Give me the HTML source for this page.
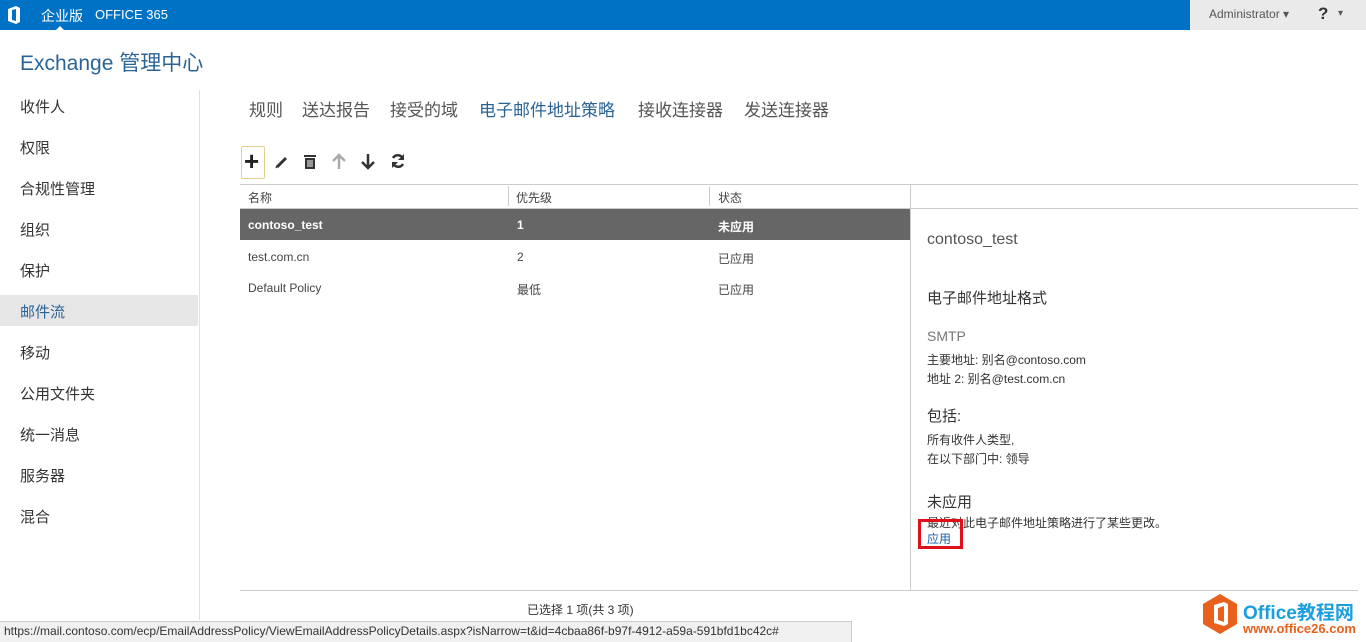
<!DOCTYPE html>
<html><head><meta charset="utf-8"><style>
*{margin:0;padding:0;box-sizing:border-box}
body{width:1366px;height:642px;overflow:hidden;background:#fff;font-family:"Liberation Sans","Noto Sans CJK SC",sans-serif;color:#333;position:relative}
.a{position:absolute;white-space:nowrap}
.top{left:0;top:0;width:1190px;height:30px;background:#0072c6}
.topr{left:1190px;top:0;width:176px;height:30px;background:#eaeaea}
.nav{left:20px;font-size:15px;color:#333}
.tab{top:96px;font-size:17px;color:#555}
.cell{font-size:12px;color:#444}
</style></head><body>
<div class="a top"></div>
<div class="a topr"></div>
<svg class="a" style="left:7px;top:6px" width="14" height="18" viewBox="0 0 14 18"><path d="M1 3 L9 0 L13 2 V16 L9 18 L1 15 Z" fill="#fff"/><path d="M5 4 L9 3 V15 L5 14 Z" fill="#0072c6"/></svg>
<div class="a" style="left:41px;top:6px;font-size:14px;color:#fff">企业版</div>
<div class="a" style="left:56px;top:26px;width:0;height:0;border-left:4px solid transparent;border-right:4px solid transparent;border-bottom:4px solid #fff"></div>
<div class="a" style="left:95px;top:7px;font-size:13px;color:#fff">OFFICE 365</div>
<div class="a" style="left:1209px;top:7px;font-size:12px;color:#555">Administrator ▾</div>
<div class="a" style="left:1318px;top:4px;font-size:17px;font-weight:bold;color:#333">?</div>
<div class="a" style="left:1338px;top:8px;font-size:10px;color:#555">▾</div>
<div class="a" style="left:20px;top:47px;font-size:21px;color:#2a6496">Exchange 管理中心</div>
<div class="a" style="left:0;top:295px;width:198px;height:31px;background:#e6e6e6"></div>
<div class="a" style="left:199px;top:90px;width:1px;height:530px;background:#e0e0e0"></div>
<div class="a nav" style="top:96px">收件人</div>
<div class="a nav" style="top:137px">权限</div>
<div class="a nav" style="top:178px">合规性管理</div>
<div class="a nav" style="top:219px">组织</div>
<div class="a nav" style="top:260px">保护</div>
<div class="a nav" style="top:301px;color:#2a6496">邮件流</div>
<div class="a nav" style="top:342px">移动</div>
<div class="a nav" style="top:383px">公用文件夹</div>
<div class="a nav" style="top:424px">统一消息</div>
<div class="a nav" style="top:465px">服务器</div>
<div class="a nav" style="top:506px">混合</div>
<div class="a tab" style="left:249px">规则</div>
<div class="a tab" style="left:302px">送达报告</div>
<div class="a tab" style="left:390px">接受的域</div>
<div class="a tab" style="left:479px;color:#2a6496">电子邮件地址策略</div>
<div class="a tab" style="left:638px">接收连接器</div>
<div class="a tab" style="left:744px">发送连接器</div>
<div class="a" style="left:241px;top:146px;width:24px;height:33px;border:1px solid #e3cf8f;border-radius:2px"></div>
<div class="a" style="left:244px;top:146px;font-size:26px;font-weight:bold;color:#222;line-height:30px">+</div>
<svg class="a" style="left:274px;top:154px" width="16" height="16" viewBox="0 0 16 16"><path d="M3 13 L12 4" stroke="#333" stroke-width="3"/><path d="M2 14 L3 12" stroke="#333" stroke-width="1.5"/></svg>
<svg class="a" style="left:303px;top:154px" width="14" height="16" viewBox="0 0 14 16"><rect x="1" y="1" width="12" height="2" fill="#333"/><rect x="2" y="4" width="10" height="11" fill="#333"/><path d="M5 6V13M7 6V13M9 6V13" stroke="#fff"/></svg>
<svg class="a" style="left:332px;top:153px" width="14" height="17" viewBox="0 0 14 17"><path d="M7 16V2M1 8L7 2L13 8" stroke="#aaa" stroke-width="2.5" fill="none"/></svg>
<svg class="a" style="left:361px;top:153px" width="14" height="17" viewBox="0 0 14 17"><path d="M7 1V15M1 9L7 15L13 9" stroke="#333" stroke-width="2.5" fill="none"/></svg>
<svg class="a" style="left:390px;top:153px" width="16" height="16" viewBox="0 0 16 16"><path d="M13 6A5.5 5.5 0 0 0 3 5M3 10A5.5 5.5 0 0 0 13 11" stroke="#333" stroke-width="2.5" fill="none"/><path d="M14 1V7H8Z M2 15V9H8Z" fill="#333"/></svg>
<div class="a" style="left:240px;top:184px;width:1118px;height:1px;background:#ccc"></div>
<div class="a" style="left:911px;top:208px;width:447px;height:1px;background:#ccc"></div>
<div class="a" style="left:240px;top:208px;width:671px;height:1px;background:#ccc"></div>
<div class="a" style="left:508px;top:186px;width:1px;height:20px;background:#ccc"></div>
<div class="a" style="left:709px;top:186px;width:1px;height:20px;background:#ccc"></div>
<div class="a" style="left:910px;top:184px;width:1px;height:406px;background:#ccc"></div>
<div class="a cell" style="left:248px;top:189px">名称</div>
<div class="a cell" style="left:516px;top:189px">优先级</div>
<div class="a cell" style="left:718px;top:189px">状态</div>
<div class="a" style="left:240px;top:209px;width:670px;height:31px;background:#666"></div>
<div class="a cell" style="left:248px;top:218px;color:#fff;font-weight:bold">contoso_test</div>
<div class="a cell" style="left:517px;top:218px;color:#fff;font-weight:bold">1</div>
<div class="a cell" style="left:718px;top:218px;color:#fff;font-weight:bold">未应用</div>
<div class="a cell" style="left:248px;top:250px">test.com.cn</div>
<div class="a cell" style="left:517px;top:250px">2</div>
<div class="a cell" style="left:718px;top:250px">已应用</div>
<div class="a cell" style="left:248px;top:281px">Default Policy</div>
<div class="a cell" style="left:517px;top:281px">最低</div>
<div class="a cell" style="left:718px;top:281px">已应用</div>
<div class="a" style="left:927px;top:231px;font-size:16px;color:#555">contoso_test</div>
<div class="a" style="left:927px;top:287px;font-size:15px;color:#333">电子邮件地址格式</div>
<div class="a" style="left:927px;top:328px;font-size:14px;color:#777">SMTP</div>
<div class="a cell" style="left:927px;top:351px;color:#333">主要地址: 别名@contoso.com</div>
<div class="a cell" style="left:927px;top:370px;color:#333">地址 2: 别名@test.com.cn</div>
<div class="a" style="left:927px;top:405px;font-size:15px;color:#333">包括:</div>
<div class="a cell" style="left:927px;top:431px;color:#333">所有收件人类型,</div>
<div class="a cell" style="left:927px;top:450px;color:#333">在以下部门中: 领导</div>
<div class="a" style="left:927px;top:491px;font-size:15px;color:#333">未应用</div>
<div class="a cell" style="left:927px;top:514px;color:#333">最近对此电子邮件地址策略进行了某些更改。</div>
<div class="a cell" style="left:927px;top:530px;color:#1a5fa8">应用</div>
<div class="a" style="left:918px;top:519px;width:45px;height:30px;border:3px solid #e0101a"></div>
<div class="a" style="left:240px;top:590px;width:1118px;height:1px;background:#ccc"></div>
<div class="a cell" style="left:527px;top:601px;color:#333">已选择 1 项(共 3 项)</div>
<div class="a" style="left:0;top:621px;width:852px;height:21px;background:#f0f0f0;border-top:1px solid #ccc;border-right:1px solid #ccc"></div>
<div class="a" style="left:4px;top:624px;font-size:12px;color:#333">https://mail.contoso.com/ecp/EmailAddressPolicy/ViewEmailAddressPolicyDetails.aspx?isNarrow=t&amp;id=4cbaa86f-b97f-4912-a59a-591bfd1bc42c#</div>
<svg class="a" style="left:1202px;top:594px" width="36" height="40" viewBox="0 0 36 40"><path d="M18 0L35 10V30L18 40L1 30V10Z" fill="#e8601c"/><path d="M12 11L22 8L26 10V30L22 32L12 29Z" fill="#fff"/><path d="M16 14L22 12V28L16 26Z" fill="#e8601c"/></svg>
<div class="a" style="left:1243px;top:598px;font-size:19px;font-weight:bold;color:#1a9ee0">Office教程网</div>
<div class="a" style="left:1243px;top:621px;font-size:13px;font-weight:bold;color:#e8601c">www.office26.com</div>
</body></html>
